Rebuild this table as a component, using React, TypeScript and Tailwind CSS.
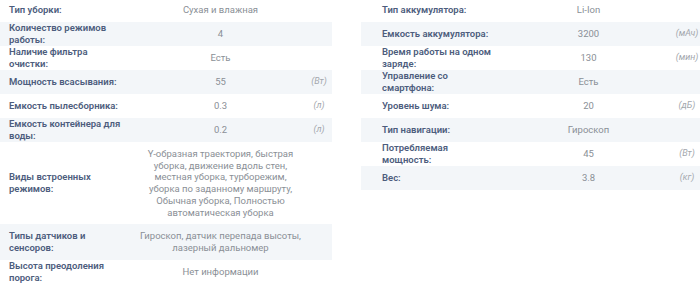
import React from "react";

type Spec = { label: string; value: string; unit?: string; narrow?: boolean };

const leftSpecs: Spec[] = [
  { label: "Тип уборки:", value: "Сухая и влажная" },
  { label: "Количество режимов работы:", value: "4" },
  { label: "Наличие фильтра очистки:", value: "Есть" },
  { label: "Мощность всасывания:", value: "55", unit: "(Вт)" },
  { label: "Емкость пылесборника:", value: "0.3", unit: "(л)" },
  { label: "Емкость контейнера для воды:", value: "0.2", unit: "(л)" },
  {
    label: "Виды встроенных режимов:",
    value:
      "Y-образная траектория, быстрая уборка, движение вдоль стен, местная уборка, турборежим, уборка по заданному маршруту, Обычная уборка, Полностью автоматическая уборка",
    narrow: true,
  },
  {
    label: "Типы датчиков и сенсоров:",
    value: "Гироскоп, датчик перепада высоты, лазерный дальномер",
  },
  { label: "Высота преодоления порога:", value: "Нет информации" },
];

const rightSpecs: Spec[] = [
  { label: "Тип аккумулятора:", value: "Li-Ion" },
  { label: "Емкость аккумулятора:", value: "3200", unit: "(мАч)" },
  { label: "Время работы на одном заряде:", value: "130", unit: "(мин)" },
  { label: "Управление со смартфона:", value: "Есть" },
  { label: "Уровень шума:", value: "20", unit: "(дБ)" },
  { label: "Тип навигации:", value: "Гироскоп" },
  { label: "Потребляемая мощность:", value: "45", unit: "(Вт)" },
  { label: "Вес:", value: "3.8", unit: "(кг)" },
];

const SpecTable = ({ specs, right }: { specs: Spec[]; right?: boolean }) => (
  <div className="w-[339px] shrink-0 flex flex-col">
    {specs.map((s, i) => (
      <div
        key={s.label}
        className={`flex items-center min-h-[24px] ${i % 2 === 1 ? "bg-[#f3f6f9]" : "bg-white"}`}
      >
        <div
          className={`w-[142px] shrink-0 text-[9.5px] leading-[12px] font-semibold text-[#4d5d7d] ${
            right ? "pl-[21px] pr-[10px]" : "pl-[16px] pr-[8px]"
          }`}
        >
          {s.label}
        </div>
        <div className="flex-1 py-[6px] text-center text-[9.5px] leading-[11.7px] text-[#8a8f96]">
          <div className={s.narrow ? "max-w-[159px] mx-auto" : ""}>{s.value}</div>
        </div>
        <div className="w-[26px] shrink-0 flex justify-center whitespace-nowrap text-[9px] italic text-[#a3a7ad]">
          {s.unit}
        </div>
      </div>
    ))}
  </div>
);

export default function App() {
  return (
    <div
      className="w-[700px] h-[284px] overflow-hidden bg-white"
      style={{ fontFamily: "Roboto, 'Noto Sans', sans-serif" }}
    >
      <div className="flex gap-[29px] -ml-[7px] -mt-[2px]">
        <SpecTable specs={leftSpecs} />
        <SpecTable specs={rightSpecs} right />
      </div>
    </div>
  );
}
